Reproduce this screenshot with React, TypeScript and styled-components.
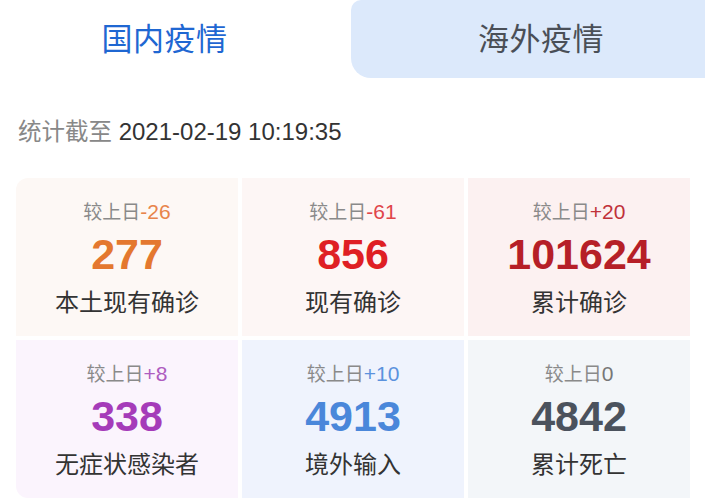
import React from 'react';
import styled, { createGlobalStyle } from 'styled-components';

const GlobalStyle = createGlobalStyle`
  html, body {
    margin: 0;
    padding: 0;
    background: #fff;
    font-family: "Liberation Sans", Arial, "Noto Sans CJK SC", sans-serif;
  }
`;

interface StatItem {
  delta: string;
  value: string;
  label: string;
  color: string;
  deltaColor: string;
  bg: string;
}

const stats: StatItem[] = [
  { delta: '-26', value: '277', label: '本土现有确诊', color: '#e4782f', deltaColor: '#e8844a', bg: '#fdf8f5' },
  { delta: '-61', value: '856', label: '现有确诊', color: '#df1f24', deltaColor: '#e0454a', bg: '#fdf6f5' },
  { delta: '+20', value: '101624', label: '累计确诊', color: '#b61f27', deltaColor: '#c0323a', bg: '#fcf1f1' },
  { delta: '+8', value: '338', label: '无症状感染者', color: '#a53bb9', deltaColor: '#ae5cc0', bg: '#fbf4fd' },
  { delta: '+10', value: '4913', label: '境外输入', color: '#4a87da', deltaColor: '#5b92dd', bg: '#eff3fd' },
  { delta: '0', value: '4842', label: '累计死亡', color: '#4b525d', deltaColor: '#777', bg: '#f3f6f9' },
];

export default function App(): JSX.Element {
  return (
    <Page>
      <GlobalStyle />
      <Tabs>
        <Tab active>国内疫情</Tab>
        <Tab>海外疫情</Tab>
      </Tabs>
      <Updated>
        <span className='up-label'>统计截至</span> 2021-02-19 10:19:35
      </Updated>
      <Grid>
        {stats.map((s) => (
          <Card key={s.label} bg={s.bg}>
            <Delta>
              较上日<DeltaNum color={s.deltaColor}>{s.delta}</DeltaNum>
            </Delta>
            <Value color={s.color}>{s.value}</Value>
            <Label>{s.label}</Label>
          </Card>
        ))}
      </Grid>
    </Page>
  );
}

const Page = styled.div`
  width: 705px;
  height: 499px;
  overflow: hidden;
  background: #fff;
`;

const Tabs = styled.div`
  display: grid;
  grid-template-columns: 351px 1fr;
  height: 78px;
`;

const Tab = styled.div<{ active?: boolean }>`
  display: flex;
  align-items: center;
  justify-content: center;
  padding-bottom: 6px;
  box-sizing: border-box;
  font-family: "Noto Sans CJK SC", sans-serif;
  font-size: 31px;
  letter-spacing: 0.5px;
  color: ${({ active }) => (active ? '#1f67d2' : '#4a4f57')};
  background: ${({ active }) => (active ? '#fff' : '#dce9fb')};
  border-bottom-left-radius: ${({ active }) => (active ? '0' : '20px')};
  border-top-left-radius: ${({ active }) => (active ? '0' : '10px')};
  padding-right: ${({ active }) => (active ? '22px' : '0')};
  padding-left: ${({ active }) => (active ? '0' : '26px')};
`;

const Updated = styled.div`
  padding: 39px 0 0 18px;
  height: 100px;
  box-sizing: border-box;
  font-size: 24px;
  color: #333;
  line-height: 27px;

  .up-label {
    color: #888;
    font-family: "Noto Sans CJK SC", sans-serif;
    font-size: 23.5px;
  }
`;

const Grid = styled.div`
  display: grid;
  grid-template-columns: repeat(3, 222px);
  grid-template-rows: 158px 158px;
  gap: 4px;
  margin-left: 16px;
  border-radius: 12px;
  overflow: hidden;
`;

const Card = styled.div<{ bg: string }>`
  display: flex;
  flex-direction: column;
  align-items: center;
  padding-top: 21px;
  box-sizing: border-box;
  background: ${({ bg }) => bg};
`;

const Delta = styled.div`
  font-family: "Noto Sans CJK SC", sans-serif;
  font-size: 19px;
  line-height: 24px;
  color: #8a8a8a;
`;

const DeltaNum = styled.span<{ color: string }>`
  font-family: "Liberation Sans", Arial, sans-serif;
  font-size: 21px;
  color: ${({ color }) => color};
`;

const Value = styled.div<{ color: string }>`
  font-size: 43px;
  font-weight: 700;
  line-height: 46px;
  margin-top: 7px;
  color: ${({ color }) => color};
`;

const Label = styled.div`
  font-family: "Noto Sans CJK SC", sans-serif;
  font-size: 24px;
  line-height: 30px;
  margin-top: 9px;
  color: #333;
`;
